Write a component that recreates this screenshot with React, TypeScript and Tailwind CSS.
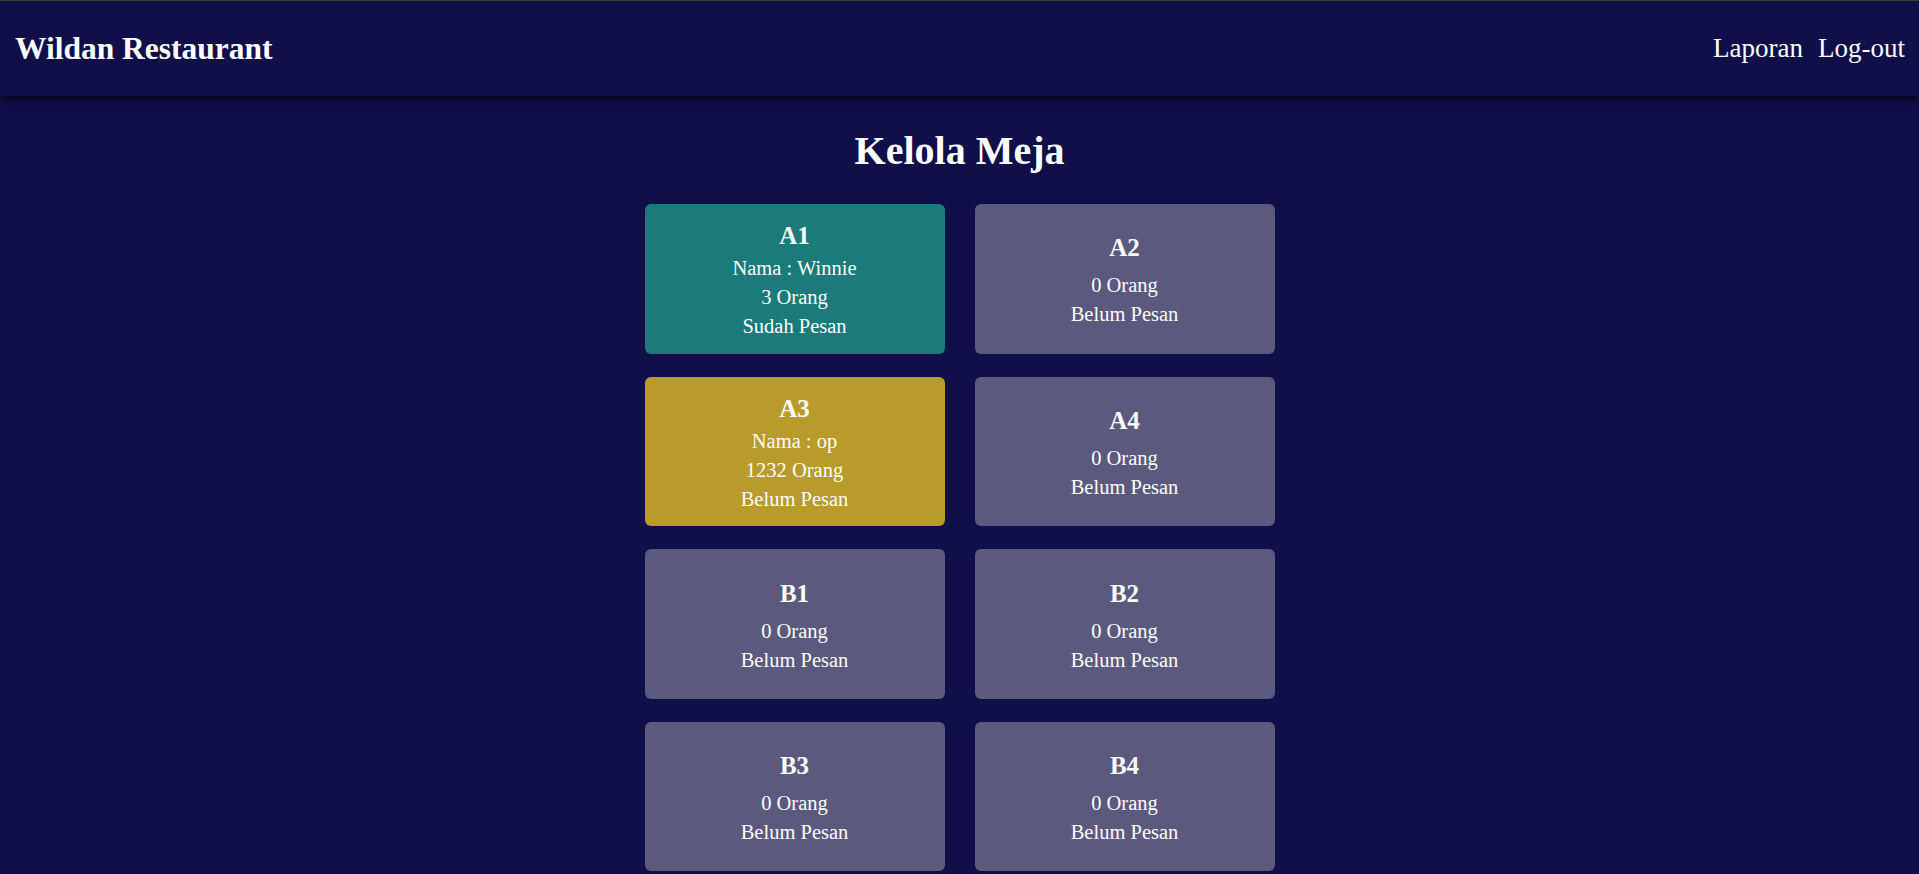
const tables = [
  { id: "A1", nama: "Winnie", orang: 3, status: "Sudah Pesan", color: "bg-[#1b7b7a]" },
  { id: "A2", orang: 0, status: "Belum Pesan", color: "bg-[#5b5a7e]" },
  { id: "A3", nama: "op", orang: 1232, status: "Belum Pesan", color: "bg-[#b89b2a]" },
  { id: "A4", orang: 0, status: "Belum Pesan", color: "bg-[#5b5a7e]" },
  { id: "B1", orang: 0, status: "Belum Pesan", color: "bg-[#5b5a7e]" },
  { id: "B2", orang: 0, status: "Belum Pesan", color: "bg-[#5b5a7e]" },
  { id: "B3", orang: 0, status: "Belum Pesan", color: "bg-[#5b5a7e]" },
  { id: "B4", orang: 0, status: "Belum Pesan", color: "bg-[#5b5a7e]" },
];

type Table = (typeof tables)[number];

const MejaCard = ({ table }: { table: Table }) => {
  return (
    <div
      className={`${table.color} h-[149.5px] rounded-md pt-[5px] flex flex-col items-center justify-center text-white cursor-pointer`}
    >
      <h3
        className={`text-[25px] leading-[30px] font-bold ${table.nama ? "mb-[3px]" : "mb-[8px]"}`}
      >
        {table.id}
      </h3>
      {table.nama && <p className="text-[20.5px] leading-[29px]">Nama : {table.nama}</p>}
      <p className="text-[20.5px] leading-[29px]">{table.orang} Orang</p>
      <p className="text-[20.5px] leading-[29px]">{table.status}</p>
    </div>
  );
};

export default function App() {
  return (
    <div className="min-h-screen bg-[#100f4a] text-white font-['Liberation_Serif','Times_New_Roman',serif]">
      <header className="h-[96px] border-t border-[#3c3c3c] bg-[#100f4a] flex items-center justify-between pl-[15px] pr-[14px] shadow-[0_4px_8px_rgba(0,0,0,0.65)] relative z-10">
        <h1 className="text-[31.5px] font-bold leading-none">Wildan Restaurant</h1>
        <nav className="flex gap-[15px] text-[27px] leading-none">
          <a href="#" className="hover:underline">Laporan</a>
          <a href="#" className="hover:underline">Log-out</a>
        </nav>
      </header>

      <main className="flex flex-col items-center pt-[31px] pb-10">
        <h2 className="text-[40px] leading-[48px] font-bold">Kelola Meja</h2>
        <div className="grid grid-cols-[300px_300px] gap-x-[30px] gap-y-[23.17px] mt-[29px]">
          {tables.map((t) => (
            <MejaCard key={t.id} table={t} />
          ))}
        </div>
      </main>
    </div>
  );
}
